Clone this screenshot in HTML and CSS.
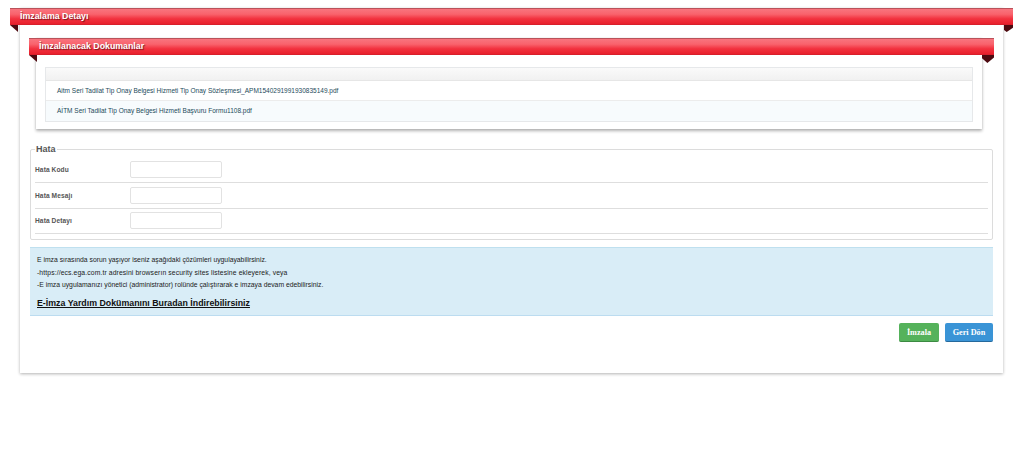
FILE: index.html
```html
<!DOCTYPE html>
<html lang="tr">
<head>
  <meta charset="UTF-8">
  <title>İmzalama Detayı</title>
  <link rel="stylesheet" href="styles.css">
</head>
<body>
  <div class="panel">
    <div class="ribbon">İmzalama Detayı</div>
    <div class="panel-body">

      <div class="inner-panel">
        <div class="ribbon ribbon-inner">İmzalanacak Dokumanlar</div>
        <div class="inner-body">
          <div class="doc-table">
            <div class="doc-head"></div>
            <div class="doc-row">Aitm Seri Tadilat Tip Onay Belgesi Hizmeti Tip Onay Sözleşmesi_APM1540291991930835149.pdf</div>
            <div class="doc-row doc-row-alt">AİTM Seri Tadilat Tip Onay Belgesi Hizmeti Başvuru Formu1108.pdf</div>
          </div>
        </div>
      </div>

      <fieldset class="error-box">
        <legend>Hata</legend>
        <div class="form-row">
          <label>Hata Kodu</label>
          <input type="text">
        </div>
        <div class="form-row">
          <label>Hata Mesajı</label>
          <input type="text">
        </div>
        <div class="form-row">
          <label>Hata Detayı</label>
          <input type="text">
        </div>
      </fieldset>

      <div class="alert">
        <p>E imza sırasında sorun yaşıyor iseniz aşağıdaki çözümleri uygulayabilirsiniz.</p>
        <p class="wide">-https://ecs.ega.com.tr adresini browserın security sites listesine ekleyerek, veya</p>
        <p>-E imza uygulamanızı yönetici (administrator) rolünde çalıştırarak e imzaya devam edebilirsiniz.</p>
        <a class="help-link" href="#">E-İmza Yardım Dokümanını Buradan İndirebilirsiniz</a>
      </div>

      <div class="actions">
        <button class="btn btn-green">İmzala</button>
        <button class="btn btn-blue">Geri Dön</button>
      </div>
    </div>
  </div>
</body>
</html>
```

FILE: styles.css
```css
/* General styles */
body {
  margin: 0;
  padding: 8px 20px 40px;
  background-color: #fff;
  font-family: 'Liberation Sans', Arial, sans-serif;
  color: #333;
}

.panel {
  position: relative;
  height: 365px;
  box-sizing: border-box;
  background-color: #fff;
  box-shadow: 0 1px 3px rgba(0, 0, 0, 0.3);
}

/* Red header band, wider than its panel */
.ribbon {
  position: relative;
  margin: 0 -10px;
  height: 17px;
  padding-left: 10px;
  box-sizing: border-box;
  background: linear-gradient(to bottom, #f8757f 0%, #f9626c 35%, #f2323f 65%, #e8202c 100%);
  border-top: 1px solid #b9525a;
  border-bottom: 1px solid #d81f2b;
  color: #fff;
  font-size: 8.8px;
  font-weight: bold;
  line-height: 14px;
  text-shadow: 1px 1px 1px rgba(0, 0, 0, 0.5);
}

/* Folded corners */
.ribbon::before,
.ribbon::after {
  content: "";
  position: absolute;
  top: 16px;
  height: 7px;
  background-color: #4d0a10;
}

.ribbon::before {
  left: 0;
  width: 8px;
  clip-path: polygon(0 0, 100% 0, 100% 100%);
}

.ribbon::after {
  right: 0;
  width: 9px;
  clip-path: polygon(0 0, 100% 0, 100% 40%, 30% 100%, 0 70%);
}

.ribbon-inner::after {
  width: 12px;
  height: 8px;
  clip-path: polygon(0 0, 100% 0, 100% 30%, 45% 100%, 0 40%);
}

.panel-body {
  padding: 13px 10px 0;
}

.inner-panel {
  margin: 0 11px 16px 6px;
  height: 91px;
  box-sizing: border-box;
  background-color: #fff;
  box-shadow: 0 2px 3px rgba(0, 0, 0, 0.3), 0 0 2px rgba(0, 0, 0, 0.08);
}

.ribbon-inner {
  margin: 0 -12px 0 -7px;
}

.inner-body {
  padding: 12px 9px 0;
}

.doc-table {
  border: 1px solid #e6e8ea;
  font-size: 6.5px;
  color: #234a5a;
}

.doc-head {
  height: 12px;
  background: linear-gradient(to bottom, #fafafa, #f1f1f1);
  border-bottom: 1px solid #e6e6e6;
}

.doc-row {
  height: 19px;
  padding-left: 11px;
  line-height: 19px;
  background-color: #fff;
}

.doc-row-alt {
  height: 20px;
  background-color: #f7fbfd;
  border-top: 1px solid #ececec;
}

.error-box {
  margin: 0 0 7px 0;
  padding: 3.5px 4px 0;
  height: 95px;
  box-sizing: border-box;
  border: 1px solid #dcdcdc;
  border-radius: 2px;
}

.error-box legend {
  padding: 0 1px;
  margin-left: 0;
  font-size: 9px;
  font-weight: bold;
  line-height: 9px;
  color: #555;
}

.form-row {
  display: flex;
  align-items: center;
  height: 25.5px;
  box-sizing: border-box;
  border-bottom: 1px solid #dedede;
}

.form-row label {
  width: 95px;
  font-size: 6.6px;
  font-weight: bold;
  letter-spacing: 0.1px;
  color: #555;
}

.form-row input {
  width: 92px;
  height: 17px;
  padding: 0;
  box-sizing: border-box;
  background-color: #fff;
  border: 1px solid #e2e2e2;
  border-radius: 2px;
}

.alert {
  height: 69px;
  padding: 6px 7px 0;
  box-sizing: border-box;
  background-color: #d9edf7;
  border-top: 1px solid #bfe0ef;
  border-bottom: 1px solid #bcdcf0;
  color: #222;
  font-size: 6.8px;
}

.alert p {
  margin: 0;
  line-height: 12.5px;
}

.alert .wide {
  letter-spacing: 0.11px;
}

.help-link {
  display: block;
  margin-top: 5px;
  font-size: 8.8px;
  font-weight: bold;
  line-height: 12px;
  color: #111;
}

.actions {
  display: flex;
  justify-content: flex-end;
  gap: 6px;
  margin-top: 7px;
}

.btn {
  height: 19px;
  padding: 0;
  border: none;
  border-radius: 2px;
  color: #fff;
  font-family: 'Liberation Serif', serif;
  font-size: 8.2px;
  font-weight: bold;
}

.btn-green {
  width: 40px;
  background-color: #55b25b;
  border-bottom: 1px solid #3c8a42;
}

.btn-blue {
  width: 48px;
  background-color: #3a94d6;
  border-bottom: 1px solid #25699c;
}
```
